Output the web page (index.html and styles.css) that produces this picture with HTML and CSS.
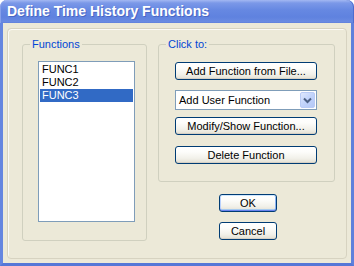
FILE: index.html
```html
<!DOCTYPE html>
<html lang="en">
<head>
    <meta charset="UTF-8">
    <title>Define Time History Functions</title>
    <link rel="stylesheet" href="styles.css">
</head>
<body>

    <div class="window">
        <div class="titleBar">Define Time History Functions</div>

        <div class="frame">
            <div class="panel">

                <div class="group groupFunctions">
                    <span class="groupLabel">Functions</span>
                    <ul class="listBox">
                        <li class="listItem">FUNC1</li>
                        <li class="listItem">FUNC2</li>
                        <li class="listItem selected">FUNC3</li>
                    </ul>
                </div>

                <div class="rightColumn">
                    <div class="group groupClick">
                        <span class="groupLabel">Click to:</span>
                        <button class="btn btnWide btnFirst">Add Function from File...</button>
                        <div class="combo">
                            <span class="comboText">Add User Function</span>
                            <span class="comboArrow">
                                <svg width="9" height="7" viewBox="0 0 9 7">
                                    <path d="M1 1.5 L4.5 5 L8 1.5" fill="none" stroke="#4d6185" stroke-width="2"/>
                                </svg>
                            </span>
                        </div>
                        <button class="btn btnWide btnModify">Modify/Show Function...</button>
                        <button class="btn btnWide btnDelete">Delete Function</button>
                    </div>

                    <button class="btn btnSmall btnDefault">OK</button>
                    <button class="btn btnSmall btnCancel">Cancel</button>
                </div>

            </div>
        </div>
    </div>

</body>
</html>
```

FILE: styles.css
```css
body {
    margin: 0;
    background-color: #fff;
    font-family: 'Liberation Sans', Arial, sans-serif;
    font-size: 11px;
}

.window {
    width: 354px;
    height: 266px;
    display: flex;
    flex-direction: column;
}

.titleBar {
    height: 23px;
    flex-shrink: 0;
    padding-left: 7px;
    line-height: 23px;
    color: #fff;
    font-weight: bold;
    font-size: 14px;
    border-radius: 7px 7px 0 0;
    background: linear-gradient(#a3b8f2 0, #7b98e8 3px, #6688e2 10px, #5f82df 17px, #6a8be2 22px, #5b7cd9 23px);
    text-shadow: 1px 1px 0 #4a67c4;
    box-shadow: inset 1px 0 #86a0ea, inset -1px 0 #4d6ccf;
}

.frame {
    flex-grow: 1;
    display: flex;
    background-color: #ece9d8;
    border: 3px solid #5f80dc;
    border-top: none;
    border-left-color: #6586e0;
    border-bottom-color: #5577d7;
    padding: 5px 4px 4px 4px;
}

.panel {
    flex-grow: 1;
    display: flex;
    align-items: flex-start;
    border: 1px solid #d7d3c1;
    border-radius: 4px;
    box-shadow: inset 1px 1px #fbfaf6;
}

.group {
    position: relative;
    border: 1px solid #d0d0bf;
    border-radius: 3px;
    box-sizing: border-box;
}

.groupLabel {
    position: absolute;
    top: -8px;
    left: 7px;
    padding: 0 2px;
    background-color: #ece9d8;
    color: #0046d5;
    line-height: 14px;
}

.groupFunctions {
    width: 125px;
    height: 197px;
    margin: 15px 0 0 14px;
    padding: 16px 11px 0 15px;
}

.listBox {
    list-style-type: none;
    margin: 0;
    padding: 1px;
    height: 161px;
    box-sizing: border-box;
    background-color: #fff;
    border: 1px solid #7f9db9;
}

.listItem {
    height: 13px;
    line-height: 13px;
    padding-left: 2px;
    color: #000;
}

.listItem.selected {
    background-color: #316ac5;
    color: #fff;
}

.rightColumn {
    display: flex;
    flex-direction: column;
    margin: 15px 0 0 11px;
}

.groupClick {
    width: 177px;
    height: 138px;
    padding: 17px 0 0 16px;
    display: flex;
    flex-direction: column;
}

.btn {
    font-family: 'Liberation Sans', Arial, sans-serif;
    font-size: 11px;
    color: #000;
    height: 18px;
    padding: 0;
    border: 1px solid #003c74;
    border-radius: 3px;
    background: linear-gradient(#ffffff 0, #fdfdfb 30%, #f2f1ea 70%, #e3e0d3 100%);
    box-shadow: inset 0 -1px #d6d0c5;
}

.btnWide {
    width: 142px;
}

.combo {
    width: 142px;
    height: 20px;
    margin-top: 10px;
    box-sizing: border-box;
    display: flex;
    align-items: center;
    background-color: #fff;
    border: 1px solid #7f9db9;
    padding: 1px;
}

.comboText {
    flex-grow: 1;
    padding-left: 2px;
    font-size: 11px;
}

.comboArrow {
    width: 15px;
    height: 16px;
    display: flex;
    align-items: center;
    justify-content: center;
    border-radius: 2px;
    background: linear-gradient(135deg, #dfe8fd 0, #c1d3fb 50%, #b4c8f6 100%);
    border: 1px solid #b9cbf5;
    box-sizing: border-box;
}

.btnModify {
    margin-top: 7px;
}

.btnDelete {
    margin-top: 11px;
}

.btnSmall {
    width: 58px;
    margin-left: 61px;
}

.btnDefault {
    margin-top: 12px;
    box-shadow: inset 0 1px #cee7ff, inset 0 -1px #6982ee, inset 1px 0 #b9d1fc, inset -1px 0 #8cb4f2, inset 0 -2px #a6caf0;
}

.btnCancel {
    margin-top: 10px;
}
```
